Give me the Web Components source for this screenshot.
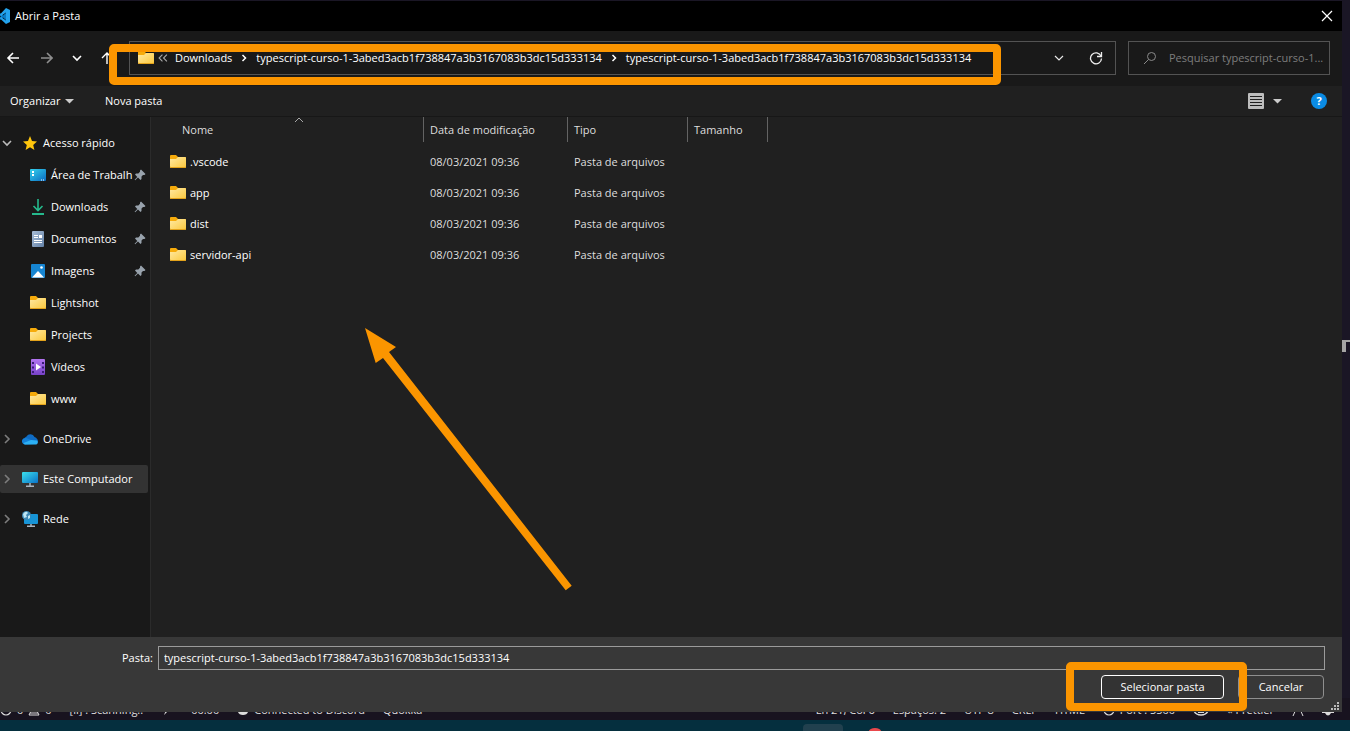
<!DOCTYPE html>
<html lang="pt-BR">
<head>
<meta charset="utf-8">
<title>Abrir a Pasta</title>
<style>
html,body{margin:0;height:100%;background:#1a1625}
body{font:11px/16px "Open Sans","Noto Sans",sans-serif;color:#fff;overflow:hidden}
</style>
</head>
<body>
<desktop-screen></desktop-screen>
<script>
const ICONS = {
vscode:{v:'0 0 11 18',s:'<path d="M0 6 3 8.500 7 5v9L3 10.500 0 13l-1-2 2-1.500-2-1.500z" fill="#0a7cc8"/><path d="M6 1 10 3v12l-4 2-6-5.500 1-1.500 5 3.500v-8L1 9 0 7.500z" fill="#23a3ee"/>'},
close:{v:'0 0 12 12',s:'<path d="M1 1l10 10M11 1 1 11" stroke="#fff" stroke-width="1.2"/>'},
back:{v:'0 0 14 14',s:'<path d="M13 7H2M7 2 2 7l5 5" fill="none" stroke="#fff" stroke-width="1.6"/>'},
forward:{v:'-2 0 14 14',s:'<path d="M0 7h11M6 2l5 5-5 5" fill="none" stroke="#8f8f8f" stroke-width="1.6"/>'},
down:{v:'0 0 10 10',s:'<path d="M1 3l4 4 4-4" fill="none" stroke="#fff" stroke-width="1.6"/>'},
downthin:{v:'0 0 10 10',s:'<path d="M1 3l4 4 4-4" fill="none" stroke="#e8e8e8" stroke-width="1.2"/>'},
up:{v:'0 0 14 14',s:'<path d="M6 13V2M1 7l5-5 5 5" fill="none" stroke="#fff" stroke-width="1.4"/>'},
refresh:{v:'0 0 14 14',s:'<path d="M12 5A5.500 5.500 0 1 0 12.500 7.500" fill="none" stroke="#eee" stroke-width="1.3"/><path d="M12.500 1v4.500H8" fill="none" stroke="#eee" stroke-width="1.300"/>'},
search:{v:'0 0 14 14',s:'<circle cx="8.500" cy="5.500" r="4" fill="none" stroke="#8a8a8a"/><path d="M5.500 8.500 1 13" stroke="#8a8a8a"/>'},
laquo:{v:'0 0 9 9',s:'<path d="M4 1.500 1 4.500l3 3M8 1.500 5 4.500l3 3" fill="none" stroke="#a8a8a8"/>'},
crumb:{v:'0 0 8 8',s:'<path d="M2.500 1l3 3-3 3" fill="none" stroke="#fff" stroke-width="1.500"/>'},
caret:{v:'0 0 10 10',s:'<path d="M1 3h9L5.500 7.500z" fill="#ccc"/>'},
view:{v:'0 0 16 16',s:'<rect width="16" height="16" rx="1" fill="#bdbdbd"/><path d="M2 3.500h12M2 6.500h12M2 9.500h12M2 12.500h12" stroke="#202020"/>'},
chevopen:{v:'0 0 10 10',s:'<path d="M1 3l4 4 4-4" fill="none" stroke="#bbb" stroke-width="1.600"/>'},
chev:{v:'0 0 10 10',s:'<path d="M3 1l4 4-4 4" fill="none" stroke="#7d7d7d" stroke-width="1.600"/>'},
sort:{v:'0 0 10 10',s:'<path d="M1 5l4-4 4 4" fill="none" stroke="#a8a8a8"/>'},
star:{v:'0 0 16 16',s:'<path d="M8 1l2 5 5 .5-3.800 3.500 1.200 5L8 12.300 3.600 15l1.200-5L1 6.500 6 6z" fill="#ffc60d"/>'},
folder:{v:'0 1 16 16',s:'<defs><linearGradient id="f" x1="0" y1="0" x2="1" y2="1"><stop stop-color="#ffe9a2"/><stop offset="1" stop-color="#fbc83c"/></linearGradient></defs><path d="M0 3q0-1 1-1h5l2 2h7q1 0 1 1v3H0z" fill="#f6ab0b"/><path d="M0 6h6l2-2h7q1 0 1 1v9q0 1-1 1H1q-1 0-1-1z" fill="url(#f)"/><path d="M0 13.500q0 1.500 1 1.500h14q1 0 1-1.500l-1 .500H1z" fill="#e3a21a"/>'},
desktop:{v:'0 0 16 16',s:'<defs><linearGradient id="d" x1="0" y1="0" x2="1" y2="1"><stop stop-color="#35d3ee"/><stop offset="1" stop-color="#0a6ac0"/></linearGradient></defs><rect y="2" width="16" height="12" rx="1" fill="url(#d)"/><path d="M2 5h2M2 8h2" stroke="#fff" stroke-width="2"/><path d="M11 13h1M13 13h1" stroke="#fff"/>'},
download:{v:'0 0 16 16',s:'<path d="M8 0v11M3.500 7 8 11.500 12.500 7" fill="none" stroke="#25b98c" stroke-width="1.600"/><path d="M2 15h12" stroke="#25b98c" stroke-width="2"/>'},
doc:{v:'0 0 16 16',s:'<defs><linearGradient id="o" x1="0" y1="0" x2="1" y2="1"><stop stop-color="#a9bdd6"/><stop offset="1" stop-color="#6482a8"/></linearGradient></defs><rect x="2" width="12" height="16" rx="1" fill="url(#o)"/><path d="M4 4.500h4M4 6.500h4M4 9.500h8M4 11.500h8" stroke="#fff"/><rect x="9" y="4" width="3" height="3" fill="#fff"/>'},
image:{v:'0 0 16 16',s:'<rect x="1" y="1" width="14" height="14" rx="1" fill="#1685d2"/><path d="M2 14.500l6-6.500 6 6.500z" fill="#fff"/><circle cx="11.500" cy="4.500" r="1.300" fill="#fff"/>'},
video:{v:'0 0 16 16',s:'<defs><linearGradient id="v" x1="0" y1="0" x2="0" y2="1"><stop stop-color="#b274f0"/><stop offset="1" stop-color="#7742c8"/></linearGradient></defs><rect x="1" width="14" height="16" rx="1" fill="url(#v)"/><path d="M3 3v12M13 3v12" stroke="#3c1c78" stroke-width="2" stroke-dasharray="2 2.500"/><path d="M6 4.500v7L11 8z" fill="#fff"/>'},
cloud:{v:'0 0 16 16',s:'<path d="M2 9a4 4 0 0 1 2.500-3.500A4.500 4.500 0 0 1 12.500 6Q16 7.500 16 10.500L14 12z" fill="#0f6cc4"/><path d="M3.500 13.500a3.300 3.300 0 1 1 .500-6.500l9 3.500V13z" fill="#1480d8"/><path d="M3 13.500q-1.500-.500-1.500-1.500L9 9l6 .500q1.500 1.500.5 3-.5 1-1.500 1z" fill="#2cb0f4"/>'},
pc:{v:'0 0 16 16',s:'<defs><linearGradient id="p" x1="0" y1="0" x2="1" y2="1"><stop stop-color="#3be0ec"/><stop offset="1" stop-color="#0a72c8"/></linearGradient></defs><rect y="1" width="16" height="11" rx="1" fill="url(#p)"/><path d="M8 12v3M4 15.200h8" stroke="#a8b4c0" stroke-width="1.500"/>'},
net:{v:'0 0 16 16',s:'<rect x="2" y="3" width="14" height="10" rx="1" fill="#1794d6"/><path d="M9 13v2M5 15.200h8" stroke="#a8b4c0" stroke-width="1.500"/><circle cx="4.500" cy="4.500" r="4.500" fill="#3e88b4"/><path d="M1 3q3-4 5-1L4 4l1 2-3 1zM6 5l2-1v3L6 8z" fill="#bfe6f4"/>'},
pin:{v:'0 0 12 12',s:'<path d="M7 .500l4.500 4.500-1 1H9L7.500 7.500V10l-1 1L4 8.500 1.200 11.300l-.600-.600L3.300 8 1 5.500l1-1h2.300L6 2.800V1.500z" fill="#98a2ac"/>'},
info:{v:'0 0 12 12',s:'<circle cx="6" cy="6" r="5" fill="none" stroke="#ddd" stroke-width="1.200"/>'},
warn:{v:'0 0 12 12',s:'<path d="M6 1l5 10H1zM2 9h8" fill="none" stroke="#ddd"/>'},
bolt:{v:'0 0 12 12',s:'<path d="M6 1h3L7 5h2L3 11l2-5H3z" fill="#ddd"/>'},
blob:{v:'0 0 12 12',s:'<path d="M1 4h10v4q-1 3-5 3T1 8z" fill="#ddd"/>'},
face:{v:'0 0 16 12',s:'<path d="M1 2h14v5q-2 4-7 4T1 7z" fill="none" stroke="#ddd" stroke-width="1.500"/><path d="M5 8h6" stroke="#ddd" stroke-width="2"/>'},
person:{v:'0 0 12 12',s:'<path d="M1 12q1-5 5-6 4 1 5 6" fill="none" stroke="#ddd"/>'},
bell:{v:'0 0 12 12',s:'<path d="M0 8h12v1H9q-3 5-6 0H0z" fill="#ddd"/>'}
};
class Base extends HTMLElement{
  constructor(){super();this.attachShadow({mode:'open'})}
  connectedCallback(){
    this.shadowRoot.innerHTML='<style>*{box-sizing:border-box}button,input{font:inherit;color:inherit;margin:0}button{background:none;border:0;padding:0}'+this.css()+'</style>'+this.html();
  }
}
const define=(name,css,html)=>customElements.define(name,class extends Base{css(){return css}html(){return typeof html==='function'?html(this):html}});

define('win-icon',':host{display:block;flex:none;width:16px;height:16px}:host([size="14"]){width:14px;height:14px}:host([size="12"]){width:12px;height:12px}:host([size="10"]){width:10px;height:10px}:host([size="8"]){width:8px;height:8px}svg{display:block;width:100%;height:100%}',
 e=>{const i=ICONS[e.getAttribute('name')];return `<svg viewBox="${i.v}" aria-hidden="true">${i.s}</svg>`});

define('call-out',':host{display:block;position:absolute;z-index:5;border:8px solid #fb9500;border-radius:5px;pointer-events:none;box-sizing:border-box}','');

define('title-bar',`:host{display:flex;align-items:center;height:30px;background:#000;padding-right:9px;gap:4px}
 win-icon.logo{width:11px;height:18px}span{flex:1}button{display:flex}`,
 '<win-icon class="logo" name="vscode"></win-icon><span>Abrir a Pasta</span><button aria-label="Fechar"><win-icon size="12" name="close"></win-icon></button>');

define('nav-bar',`:host{display:flex;align-items:center;position:relative;height:55px;box-sizing:border-box;background:#191919;padding:0 12px 1px 6px}
 button{display:flex}.hist{display:flex;align-items:center;width:123px;gap:19px}
 nav{flex:1;min-width:0;height:34px;border:1px solid #535353;display:flex;align-items:center;padding:0 12px 0 8px}
 ol{display:flex;align-items:center;list-style:none;margin:0 auto 0 0;padding:0;gap:8px}li{display:flex;align-items:center;gap:8px;white-space:nowrap}a{color:inherit;text-decoration:none}
 .more{margin:0 7px 0 4px}nav button+button{margin-left:25px}
 .search{display:flex;align-items:center;width:202px;height:34px;border:1px solid #535353;margin-left:12px;padding-left:14px;gap:12px}
 input{flex:1;min-width:0;background:none;border:0;padding:0;outline:0}input::placeholder{color:#7d7d7d;opacity:1}
 call-out{left:109px;top:13px;right:341px;height:41px}`,
 `<div class="hist"><button aria-label="Voltar"><win-icon size="14" name="back"></win-icon></button><button aria-label="Avançar"><win-icon size="14" name="forward"></win-icon></button><button aria-label="Locais recentes"><win-icon size="10" name="down"></win-icon></button><button aria-label="Acima"><win-icon size="14" name="up"></win-icon></button></div>
 <nav><win-icon name="folder"></win-icon><win-icon class="more" size="10" name="laquo"></win-icon><ol><li><a href="#d">Downloads</a><win-icon size="8" name="crumb"></win-icon></li><li><a href="#c">typescript-curso-1-3abed3acb1f738847a3b3167083b3dc15d333134</a><win-icon size="8" name="crumb"></win-icon></li><li><a href="#p">typescript-curso-1-3abed3acb1f738847a3b3167083b3dc15d333134</a></li></ol><button aria-label="Locais anteriores"><win-icon size="10" name="downthin"></win-icon></button><button aria-label="Atualizar"><win-icon size="14" name="refresh"></win-icon></button></nav>
 <div class="search"><win-icon size="14" name="search"></win-icon><input type="text" aria-label="Pesquisar" placeholder="Pesquisar typescript-curso-1..."></div><call-out></call-out>`);

define('tool-bar',`:host{display:flex;align-items:center;height:31px;box-sizing:border-box;background:#202020;border-bottom:1px solid #171717;padding:0 15px 0 10px}
 button{display:flex;align-items:center;gap:4px}.org{width:95px}.view{margin-left:auto;gap:8px}.help{margin-left:29px;width:16px;height:16px;border-radius:50%;background:#0a8be4;justify-content:center;font-weight:700;line-height:16px}`,
 '<button class="org">Organizar<win-icon size="10" name="caret"></win-icon></button><button>Nova pasta</button><button class="view" aria-label="Modo de exibição"><win-icon name="view"></win-icon><win-icon size="10" name="caret"></win-icon></button><button class="help">?</button>');

define('tree-item',`:host{display:block}a{display:flex;align-items:center;height:28px;color:#fff;text-decoration:none;padding-left:2px;border-radius:2px}
 .ico{margin:0 5px 0 10px}:host([nested]) a{padding-left:30px}:host([nested]) .ico{margin-left:0}:host([selected]) a{background:#333}
 span{white-space:nowrap;flex:1}.pin{margin:0 2px}`,
 e=>`<a href="#i">${e.hasAttribute('nested')?'':`<win-icon size="10" name="${e.hasAttribute('open')?'chevopen':'chev'}"></win-icon>`}<win-icon class="ico" name="${e.getAttribute('icon')}"></win-icon><span><slot></slot></span>${e.hasAttribute('pinned')?'<win-icon class="pin" size="12" name="pin"></win-icon>':''}</a>`);

define('side-tree',`:host{display:flex;flex-direction:column;gap:12px;width:151px;box-sizing:border-box;flex:none;background:#191919;border-right:1px solid #2b2b2b;padding:12px 2px 0 0}section{display:flex;flex-direction:column;gap:4px}`,
 `<section><tree-item open icon="star">Acesso rápido</tree-item><tree-item nested pinned icon="desktop">Área de Trabalh</tree-item><tree-item nested pinned icon="download">Downloads</tree-item><tree-item nested pinned icon="doc">Documentos</tree-item><tree-item nested pinned icon="image">Imagens</tree-item><tree-item nested icon="folder">Lightshot</tree-item><tree-item nested icon="folder">Projects</tree-item><tree-item nested icon="video">Vídeos</tree-item><tree-item nested icon="folder">www</tree-item></section><tree-item icon="cloud">OneDrive</tree-item><tree-item selected icon="pc">Este Computador</tree-item><tree-item icon="net">Rede</tree-item>`);

define('file-list',`:host{display:block;position:relative;flex:1;min-width:0;background:#202020}
 table{border-collapse:separate;border-spacing:0;table-layout:fixed;width:617px;color:#dedede}
 th{height:25px;font-weight:400;text-align:left;padding:0 6px;border-right:1px solid #636363;position:relative}th:first-child{padding-left:31px}
 th win-icon{position:absolute;left:143px;top:0}
 td{height:31px;padding:0 6px}td:first-child{padding-left:19px;color:#fff}td div{display:flex;align-items:center;gap:4px}
 tbody::before{content:"";display:block;height:4px}
 .arrow{position:absolute;left:214px;top:211px;width:208px;height:264px}`,
 `<table><colgroup><col style="width:273px"><col style="width:144px"><col style="width:120px"><col style="width:80px"></colgroup><thead><tr><th>Nome<win-icon size="10" name="sort"></win-icon></th><th>Data de modificação</th><th>Tipo</th><th>Tamanho</th></tr></thead><tbody>${['.vscode','app','dist','servidor-api'].map(n=>`<tr><td><div><win-icon name="folder"></win-icon>${n}</div></td><td>08/03/2021 09:36</td><td>Pasta de arquivos</td><td></td></tr>`).join('')}</tbody></table>
 <svg class="arrow" viewBox="0 0 208 264" aria-hidden="true"><path d="M0 0 31 19l-7 5L206.700 257.700l-6 4.600L18 30l-7.300 5z" fill="#fb9500"/></svg>`);

define('dialog-footer',`:host{display:flex;flex-direction:column;position:relative;height:75px;box-sizing:border-box;background:#383838;padding:9px 17px 0 122px}
 .row{display:flex;align-items:center;gap:5px}input{flex:1;height:24px;background:none;border:1px solid #9b9b9b;padding:0 5px 2px;outline:0}
 .btns{display:flex;justify-content:flex-end;gap:14px;margin-top:5px;padding-right:1px}.btns button{height:24px;width:86px;border:1px solid #8f8f8f;border-radius:4px}.btns .ok{width:123px;border-color:#fff;background:#333}
 call-out{right:95px;top:25px;width:181px;height:49px}.grip{position:absolute;right:3px;bottom:2px;width:8px;height:8px}`,
 `<div class="row"><label for="n">Pasta:</label><input id="n" value="typescript-curso-1-3abed3acb1f738847a3b3167083b3dc15d333134"></div><div class="btns"><button class="ok">Selecionar pasta</button><button>Cancelar</button></div><call-out></call-out><svg class="grip" viewBox="0 0 8 8" aria-hidden="true"><path d="M6 0h2v2H6zM3 3h2v2H3zM6 3h2v2H6zM0 6h2v2H0zM3 6h2v2H3zM6 6h2v2H6z" fill="#bbb"/></svg>`);

define('folder-dialog',':host{display:flex;flex-direction:column;flex:1;min-height:0;margin-right:8px;position:relative;z-index:1}main{display:flex;flex:1;min-height:0}',
 '<title-bar></title-bar><nav-bar></nav-bar><tool-bar></tool-bar><main><side-tree></side-tree><file-list></file-list></main><dialog-footer></dialog-footer>');

/* The editor's status bar runs on behind the dialog's lower edge. */
define('status-bar',`:host{display:flex;justify-content:space-between;align-items:center;height:22px;margin-top:-14px;padding:2px 16px 0 0;box-sizing:border-box;background:#18131f;color:#e0e0e0;white-space:nowrap}
 div{display:flex;gap:18px;align-items:center}span{display:flex;align-items:center;gap:5px}`,
 `<div><span><win-icon size="12" name="info"></win-icon>0<win-icon size="12" name="warn"></win-icon>0</span><span>[ii] : Scanning..</span><win-icon size="12" name="bolt"></win-icon><span>00:00</span><span><win-icon size="12" name="blob"></win-icon>Connected to Discord</span><span>Quokka</span></div>
 <div><span>Ln 21, Col 6</span><span>Espaços: 2</span><span>UTF-8</span><span>CRLF</span><span>HTML</span><span><win-icon size="12" name="info"></win-icon>Port : 5500</span><win-icon name="face"></win-icon><span>« Prettier</span><win-icon size="12" name="person"></win-icon><win-icon size="12" name="bell"></win-icon></div>`);

define('task-bar',`:host{display:flex;align-items:flex-end;justify-content:center;gap:26px;height:11px;overflow:hidden;background:#052f3e;padding-left:334px}
 i{display:block;width:40px;height:7px;border-radius:4px 4px 0 0;background:#21404e}b{display:block;width:12px;height:3px;border-radius:50% 50% 0 0/100% 100% 0 0;background:#e9484c}`,'<i></i><b></b>');

define('desktop-screen',`:host{display:flex;flex-direction:column;position:relative;height:100vh;padding-top:1px;box-sizing:border-box}
 .edge{position:absolute;right:0;top:340px;width:8px;height:12px}`,
 '<folder-dialog></folder-dialog><status-bar></status-bar><task-bar></task-bar><svg class="edge" viewBox="0 0 8 12" aria-hidden="true"><path d="M0 0h8v2H4v10H0z" fill="#a5a5a5"/></svg>');
</script>
</body>
</html>
